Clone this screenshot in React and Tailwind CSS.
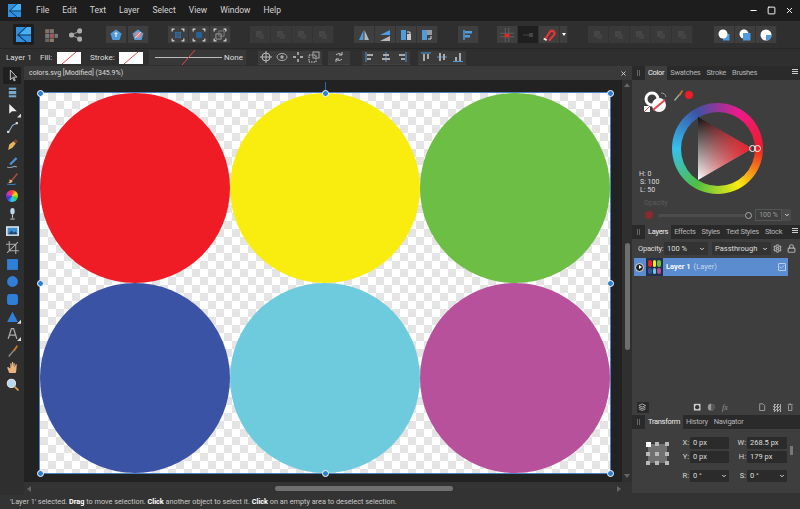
import { X, Minus, Square, ChevronDown, Settings, Lock, Check } from "lucide-react";

const menus = ["File", "Edit", "Text", "Layer", "Select", "View", "Window", "Help"];

function Logo({ size = 16 }) {
    return (
        <svg width={size} height={size} viewBox="0 0 16 16">
            <path d="M0 0h16v16H0z" fill="#2f8fe0" />
            <path d="M11 0h5v8.500H2z" fill="#49b0f5" />
            <path d="M11 0 2 8.500h14M2 8.500 11 16" stroke="#0d3557" strokeWidth="1.100" fill="none" />
        </svg>
    );
}

function Btn({ children, dim, dark, w = "w-[21px]" }) {
    return (
        <div className={`${w} h-[17px] flex items-center justify-center border-r border-[#333] ${dark ? "bg-[#1f1f1f]" : dim ? "bg-[#393939]" : "bg-[#3f3f3f]"}`}>
            {children}
        </div>
    );
}

function Ico({ children, s = 12 }) {
    return (
        <svg width={s} height={s} viewBox="0 0 12 12">
            {children}
        </svg>
    );
}

function Dim() {
    return (
        <Ico>
            <rect x="2" y="2" width="6" height="6" fill="#464646" />
            <rect x="5" y="5" width="5" height="5" fill="#434343" />
        </Ico>
    );
}

function Corners({ children }) {
    return (
        <Ico s={14}>
            <path d="M1 3V1h2M9 1h2v2M11 9v2H9M3 11H1V9" stroke="#d8d8d8" fill="none" />
            {children}
        </Ico>
    );
}

function ContextIcon({ kind }) {
    return (
        <Ico>
            {kind === 0 && <><circle cx="6" cy="6" r="4" stroke="#bbb" fill="none" /><path d="M6 0v12M0 6h12" stroke="#bbb" /></>}
            {kind === 1 && <><ellipse cx="6" cy="6" rx="5" ry="3.500" stroke="#aaa" fill="none" /><circle cx="6" cy="6" r="1.700" fill="#aaa" /></>}
            {kind === 2 && <path d="M6 1v3M6 8v3M1 6h3M8 6h3" stroke="#ccc" strokeWidth="1.300" />}
            {kind === 3 && <><rect x="1" y="4" width="7" height="7" stroke="#ccc" strokeDasharray="1.500 1" fill="none" /><rect x="5" y="1" width="6" height="6" stroke="#aaa" fill="none" /></>}
            {kind === 4 && <path d="M3 4a4 4 0 0 1 6 0M9 8a4 4 0 0 1-6 0M9 1v3H6M3 11V8h3" stroke="#bbb" fill="none" />}
            {kind === 5 && <><path d="M2 1v10" stroke="#4a9ae0" /><path d="M3 3h6v2H3zM3 7h4v2H3z" fill="#aaa" /></>}
            {kind === 6 && <><path d="M6 1v10" stroke="#4a9ae0" /><path d="M3 3h6v2H3zM2 7h8v2H2z" fill="#aaa" /></>}
            {kind === 7 && <><path d="M10 1v10" stroke="#4a9ae0" /><path d="M3 3h6v2H3zM5 7h4v2H5z" fill="#aaa" /></>}
            {kind === 8 && <><path d="M1 2h10" stroke="#4a9ae0" /><path d="M3 3h2v7H3zM7 3h2v5H7z" fill="#aaa" /></>}
            {kind === 9 && <><path d="M1 6h10" stroke="#4a9ae0" /><path d="M3 2h2v8H3zM7 3h2v6H7z" fill="#aaa" /></>}
            {kind === 10 && <><path d="M1 10.500h10" stroke="#4a9ae0" /><path d="M3 6h2v4H3zM7 2h2v8H7z" fill="#aaa" /></>}
        </Ico>
    );
}

function CtxBtn({ kind, w = "w-[16px]" }) {
    return (
        <div className={`${w} h-[14px] bg-[#3b3b3b] flex items-center justify-center border-b border-[#444]`}>
            <ContextIcon kind={kind} />
        </div>
    );
}

function NoneSwatch() {
    return (
        <svg width="24" height="12" viewBox="0 0 24 12">
            <rect width="24" height="12" fill="#fff" />
            <path d="M5 12 19 0" stroke="#e2474d" strokeWidth="1" />
        </svg>
    );
}

const tools = [
    <path key="a" d="M4 1v9l2-2 1.500 3 1-.500-1.500-3H10z" fill="#2a2a2a" stroke="#ddd" strokeWidth=".8" />,
    <g key="b"><rect x="2" y="1" width="8" height="10" fill="#7aa8cc" stroke="#2a2a2a" /><path d="M2 4h8M2 8h8" stroke="#2a2a2a" /></g>,
    <path key="c" d="M3 1v9l2.500-2.500H10z" fill="#eee" />,
    <g key="d"><path d="M2 11 6 4l4-2" stroke="#8fb4d8" fill="none" /><rect x="1" y="9" width="2" height="2" fill="#ddd" /><rect x="9" y="1" width="2" height="2" fill="#ddd" /></g>,
    <g key="e"><path d="M2 11 3 6l4-3 2 2-3 4z" fill="#e7b35a" /><path d="m7 3 2-2 2 2-2 2z" fill="#7a4030" /></g>,
    <g key="f"><path d="m3 8 6-6 1.500 1.500-6 6z" fill="#4a90d8" /><path d="M1 11q3 1 5 0t4 0" stroke="#8899aa" fill="none" /></g>,
    <g key="g"><path d="m5 7 5-6 1 1-5 6z" fill="#a0503c" /><path d="M3 7q3 0 3 2-2 2-4 1 2-1 1-3z" fill="#e4b070" /><path d="M1 11q4 1 8 0" stroke="#3d7bbf" fill="none" /></g>,
    null,
    <g key="i"><ellipse cx="6" cy="4" rx="2" ry="3" fill="#bcd8ee" /><path d="M6 7v3M4 11h4" stroke="#ccc" /></g>,
    <g key="j"><rect x="0" y="2" width="12" height="9" fill="#d6e2ec" /><rect x="1.500" y="3.500" width="9" height="6" fill="#3e8ed0" /><path d="M2 9.500 5 6l2 2 2-1 1.500 2.500z" fill="#22476e" /></g>,
    <path key="k" d="M3 0v9h9M0 3h9v9M1 11l10-10" stroke="#aaa" fill="none" />,
    <rect key="l" x="1" y="1" width="10" height="10" fill="#2f7fd6" />,
    <circle key="m" cx="6" cy="6" r="5" fill="#2f7fd6" />,
    <rect key="n" x="1" y="1" width="10" height="10" rx="2.500" fill="#2f7fd6" />,
    <path key="o" d="M6 1.500 11 11H1z" fill="#2f7fd6" />,
    <path key="p" d="M2 11 5 1.500h2L10 11M3.500 7.500h5" stroke="#aaa" strokeWidth="1.200" fill="none" />,
    <g key="q"><path d="m2 11 5-6 1 1-5 6z" fill="#888" /><path d="m7 5 3-4 1 1-3 5z" fill="#c97a2c" /></g>,
    <path key="r" d="M3 11 1 6l1-.500L4 7V2l1 0 .500 3V1h1l.500 4V2l1 0v4l1-3 1 0-.500 6L9 11z" fill="#e8b27c" />,
    <g key="s"><circle cx="5" cy="5" r="3.800" fill="#b8d6ee" stroke="#e4e4e4" /><path d="m8 8 3.500 3.500" stroke="#d99a4e" strokeWidth="1.600" /></g>,
];

function Tool({ icon, index }) {
    const hasCorner = index === 2 || index === 14 || index === 15;
    return (
        <div className={`relative w-[18px] ml-[3px] h-[17.200px] flex items-center justify-center ${index === 0 ? "bg-[#1f1f1f]" : ""}`}>
            {icon}
            {hasCorner && <div className="w-[4px] h-[4px] absolute right-0 bottom-[1px] bg-[#ddd] [clip-path:polygon(100%_0,100%_100%,0_100%)]" />}
        </div>
    );
}

function ColorWheelIcon() {
    return <div className="w-[12px] h-[12px] rounded-full bg-[conic-gradient(#f33,#fd0,#3c4,#3cf,#33c,#c3c,#f33)]" />;
}

function Tabs({ items, active }) {
    return (
        <div className="h-[14px] bg-[#2a2a2a] flex items-stretch text-[7.500px] tracking-[-0.3px] leading-[14px] shrink-0 relative whitespace-nowrap">
            <div className="w-[13px] flex items-center justify-center gap-px">
                <div className="w-px h-[6px] bg-[#666]" />
                <div className="w-px h-[6px] bg-[#666]" />
            </div>
            {items.map((t) => (
                <div key={t} className={t === active ? "px-[3px] bg-[#3e3e3e] text-[#eee]" : "px-[3px] text-[#b4b4b4]"}>
                    {t}
                </div>
            ))}
        </div>
    );
}

function PanelMenu() {
    return (
        <div className="absolute right-[2px] top-[3px] flex flex-col gap-px w-[6px]">
            <div className="h-px bg-[#ccc]" />
            <div className="h-px bg-[#ccc]" />
            <div className="h-px bg-[#ccc]" />
        </div>
    );
}

function Handle({ className }) {
    return <div className={`absolute w-[7px] h-[7px] -ml-[3.500px] -mt-[3.500px] rounded-full bg-[#2a7fd0] border border-white ${className}`} />;
}

function Field({ label, value, drop, wide }) {
    return (
        <div className="flex items-center">
            <span className="w-[11px] text-right text-[7.500px] text-[#d8d8d8] mr-[1px]">{label}</span>
            <div className={`${wide ? "w-[40px]" : "w-[39px]"} h-[12px] bg-[#2b2b2b] rounded-[1px] text-[7.500px] leading-[12px] pl-[3px] text-[#ddd] flex justify-between items-center`}>
                {value}
                {drop && <ChevronDown size={6} strokeWidth={4} className="mr-[2px] text-[#ddd]" />}
            </div>
        </div>
    );
}

export default function App() {
    return (
        <div className="w-[800px] h-[509px] overflow-hidden flex flex-col bg-[#2e2e2e] text-[#ddd] font-['Roboto',sans-serif]">
            {/* menu bar */}
            <div className="h-[21px] bg-[#1d1d1d] flex items-center shrink-0">
                <div className="ml-[8px]"><Logo size={13} /></div>
                <div className="flex ml-[15px] gap-[13px] text-[8.500px] text-[#d4d4d4]">
                    {menus.map((m) => <span key={m}>{m}</span>)}
                </div>
                <div className="ml-auto flex items-center gap-[9px] mr-[6px] text-white">
                    <Minus size={9} strokeWidth={3} />
                    <Square size={9} strokeWidth={2.500} />
                    <X size={9} strokeWidth={2.500} />
                </div>
            </div>

            {/* main toolbar */}
            <div className="h-[28px] bg-[#2f2f2f] border-b border-[#262626] flex items-center pl-[13px] shrink-0">
                <div className="w-[21px] h-[21px] bg-[#1d1d1d] flex items-center justify-center rounded-[2px]"><Logo size={15} /></div>
                <div className="ml-[10px]">
                    <Ico s={14}>
                        <rect x="1" y="1" width="3.500" height="3.500" fill="#8a6e5a" /><rect x="5" y="1" width="3.500" height="3.500" fill="#777" />
                        <rect x="1" y="5" width="3.500" height="3.500" fill="#777" /><rect x="5" y="5" width="3.500" height="3.500" fill="#a05a5a" /><rect x="9" y="5" width="3.500" height="3.500" fill="#777" />
                        <rect x="5" y="9" width="3.500" height="3.500" fill="#8f7a62" /><rect x="1" y="9" width="3.500" height="3.500" fill="#666" />
                    </Ico>
                </div>
                <div className="ml-[10px]">
                    <Ico s={14}><path d="M3 6 10 2.500M3 6l7 3.500" stroke="#8c8c8c" /><circle cx="3" cy="6" r="2.200" fill="#aaa" /><circle cx="10" cy="2.500" r="2.200" fill="#aaa" /><circle cx="10" cy="9.500" r="2.200" fill="#aaa" /></Ico>
                </div>
                <div className="ml-[24px] flex gap-px">
                    <Btn><Ico><path d="M6 .500 11.500 4.500 9.500 11h-7L.500 4.500z" fill="#4f9bdc" /><path d="M6 8V4M4.500 5 6 3.500 7.500 5" stroke="#fff" fill="none" /></Ico></Btn>
                    <Btn><Ico><path d="M6 .500 11.500 4.500 9.500 11h-7L.500 4.500z" fill="#5a9cd8" /><circle cx="6" cy="6" r="3" fill="#e3848a" /><path d="m3 9 6-6" stroke="#ddd" /></Ico></Btn>
                </div>
                <div className="ml-[19px] flex">
                    <Btn><Corners><path d="M3.500 3.500h5v5h-5z" fill="#2d7cc6" /><path d="M3.500 5.200h5M3.500 6.800h5M5.200 3.500v5M6.800 3.500v5" stroke="#404040" strokeWidth=".5" /></Corners></Btn>
                    <Btn><Corners><path d="M3.500 3.500h5v5h-5z" fill="#27639c" /></Corners></Btn>
                    <Btn><Corners><path d="M2.500 5h4.500v4.500H2.500z" stroke="#aaa" fill="none" strokeWidth=".7" /><path d="M5 2.500h4.500V7H5z" stroke="#888" fill="none" strokeWidth=".7" /></Corners></Btn>
                </div>
                <div className="ml-[19px] flex">
                    {[0, 1, 2, 3].map((i) => <Btn key={i} dim><Dim /></Btn>)}
                </div>
                <div className="ml-[20px] flex">
                    <Btn><Ico><path d="M5.500 1v10H1z" fill="#4f9bdc" /><path d="M6.500 1v10H11z" fill="#b8b8b8" /></Ico></Btn>
                    <Btn><Ico><path d="M11 1v5H1z" fill="#4f9bdc" /><path d="M11 7v5H1z" fill="#b8b8b8" /></Ico></Btn>
                    <Btn><Ico><rect x="1" y="1" width="5" height="10" fill="#4f9bdc" /><rect x="7" y="5" width="4" height="6" fill="#c8c8c8" /><path d="M7 3h3v2" stroke="#ddd" fill="none" /></Ico></Btn>
                    <Btn><Ico><rect x="1" y="1" width="5" height="10" fill="#4f9bdc" /><rect x="6" y="1" width="5" height="5" fill="#999" /><path d="M10 7v3H7" stroke="#ddd" fill="none" /></Ico></Btn>
                </div>
                <div className="ml-[20px]">
                    <Btn><Ico><path d="M2 1v10" stroke="#4f9bdc" strokeWidth="1.500" /><path d="M3 2h7v2.500H3zM3 6h5v2.500H3z" fill="#4f9bdc" /></Ico></Btn>
                </div>
                <div className="ml-[18px] flex">
                    <Btn><Ico s={14}><path d="M0 4.500h12M0 7.500h12M4.500 0v12M7.500 0v12" stroke="#666" strokeWidth=".7" /><rect x="4" y="5" width="4" height="3" fill="#e22" /></Ico></Btn>
                    <Btn dark><Ico><path d="M1 6h6" stroke="#444" /><rect x="7" y="4" width="4" height="4" fill="#444" /></Ico></Btn>
                    <Btn><Ico s={14}><path d="M2.500 10 7 3a2.200 2.200 0 0 1 3.500 2.500L6 11" stroke="#e03535" strokeWidth="2" fill="none" /><path d="m1.500 9 2.500 1.500" stroke="#eee" strokeWidth="1.500" /></Ico></Btn>
                    <Btn w="w-[8px]"><div className="border-x-[2.500px] border-x-transparent border-t-[3px] border-t-white" /></Btn>
                </div>
                <div className="ml-[20px] flex">
                    {[0, 1, 2, 3, 4].map((i) => <Btn key={i} dim><Dim /></Btn>)}
                </div>
                <div className="ml-[21px] flex">
                    <Btn><Ico><rect x="5" y="5" width="6.500" height="6.500" fill="#4f9bdc" /><circle cx="5" cy="5" r="4.500" fill="#fff" /></Ico></Btn>
                    <Btn><Ico><circle cx="5" cy="5" r="4.500" fill="#fff" /><rect x="4" y="4" width="7.500" height="7.500" fill="#4f9bdc" /></Ico></Btn>
                    <Btn><Ico><circle cx="6" cy="6" r="5.500" fill="#fff" /><path d="M6 6h5.500a5.500 5.500 0 0 1-5.500 5.500z" fill="#4f9bdc" /></Ico></Btn>
                </div>
            </div>

            {/* context bar */}
            <div className="h-[17px] bg-[#2f2f2f] flex items-center pl-[6px] text-[8px] shrink-0">
                <span className="w-[28px] whitespace-nowrap">Layer 1</span>
                <span className="ml-[6px] w-[11px]">Fill:</span>
                <div className="ml-[6px]"><NoneSwatch /></div>
                <span className="ml-[9px] w-[23px]">Stroke:</span>
                <div className="ml-[6px]"><NoneSwatch /></div>
                <div className="ml-[6px] w-[97px] h-[15px] bg-[#383838] flex items-center pl-[6px] relative">
                    <div className="w-[67px] h-px bg-[#bbb]" />
                    <svg className="absolute left-[32px] top-0" width="16" height="15"><path d="M1 15 14 0" stroke="#e2474d" /></svg>
                    <span className="ml-[2px]">None</span>
                </div>
                <div className="ml-[12px] flex">
                    {[0, 1, 2, 3].map((k) => <CtxBtn key={k} kind={k} />)}
                </div>
                <div className="ml-[6px]"><CtxBtn kind={4} w="w-[22px]" /></div>
                <div className="ml-[12px] flex">
                    <CtxBtn kind={5} /><CtxBtn kind={6} /><CtxBtn kind={7} />
                </div>
                <div className="ml-[8px] flex">
                    <CtxBtn kind={8} /><CtxBtn kind={9} /><CtxBtn kind={10} />
                </div>
            </div>

            <div className="flex h-[429px] shrink-0">
                {/* tools */}
                <div className="w-[24px] bg-[#2f2f2f] shrink-0 flex flex-col pt-[1px]">
                    {tools.map((t, i) => (
                        <Tool key={i} index={i} icon={t ? <Ico s={13}>{t}</Ico> : <ColorWheelIcon />} />
                    ))}
                </div>

                {/* document */}
                <div className="w-[608px] shrink-0 flex flex-col">
                    <div className="h-[14px] bg-[#3a3a3a] flex items-center pl-[5px] text-[7px] text-[#ddd] shrink-0">
                        colors.svg [Modified] (345.9%)
                        <X size={7} strokeWidth={3} className="ml-auto mr-[5px] text-[#ddd]" />
                    </div>
                    <div className="flex h-[402px] shrink-0">
                        <div className="w-[598px] bg-[#222222] pl-[16px] pt-[13px] relative">
                            <div className="absolute left-[301px] top-[2px] w-px h-[11px] bg-[#2b6cb0]" />
                            <div className="relative w-[570px] h-[380px] outline outline-1 outline-[#4a80c4]">
                                <div className="w-[570px] h-[380px] grid grid-cols-3 grid-rows-2 bg-[repeating-conic-gradient(#e4e4e4_0_25%,#ffffff_0_50%)] bg-[length:16px_16px]">
                                    <div className="rounded-full bg-[#ef1c26]" />
                                    <div className="rounded-full bg-[#f9ed10]" />
                                    <div className="rounded-full bg-[#6cbe45]" />
                                    <div className="rounded-full bg-[#3b53a4]" />
                                    <div className="rounded-full bg-[#6dcbdd]" />
                                    <div className="rounded-full bg-[#b8519c]" />
                                </div>
                                <Handle className="left-0 top-0" />
                                <Handle className="left-1/2 top-0" />
                                <Handle className="left-full top-0" />
                                <Handle className="left-0 top-1/2" />
                                <Handle className="left-full top-1/2" />
                                <Handle className="left-0 top-full" />
                                <Handle className="left-1/2 top-full" />
                                <Handle className="left-full top-full" />
                            </div>
                        </div>
                        <div className="w-[10px] bg-[#2f2f2f] flex flex-col items-center">
                            <div className="mt-[3px] border-x-[3px] border-x-transparent border-b-[4px] border-b-[#666]" />
                            <div className="mt-[156px] w-[5px] h-[107px] rounded-full bg-[#6e6e6e]" />
                            <div className="mt-auto mb-[4px] border-x-[3px] border-x-transparent border-t-[4px] border-t-[#666]" />
                        </div>
                    </div>
                    <div className="h-[13px] bg-[#333333] flex items-center shrink-0">
                        <div className="ml-[3px] border-y-[3px] border-y-transparent border-r-[4px] border-r-[#666]" />
                        <div className="ml-[244px] w-[178px] h-[5px] rounded-full bg-[#707070]" />
                        <div className="ml-[164px] border-y-[3px] border-y-transparent border-l-[4px] border-l-[#666]" />
                    </div>
                </div>

                {/* right panels */}
                <div className="flex-1 min-w-0 flex flex-col bg-[#3e3e3e]">
                    <div className="relative">
                        <Tabs items={["Color", "Swatches", "Stroke", "Brushes"]} active="Color" />
                        <PanelMenu />
                    </div>
                    <div className="h-[145px] shrink-0 flex flex-col relative">
                        <div className="absolute left-[11px] top-[11px]">
                            <svg width="24" height="22" viewBox="0 0 24 22">
                                <circle cx="9" cy="8" r="6" fill="none" stroke="#fff" strokeWidth="3" />
                                <circle cx="16" cy="14" r="7" fill="#fff" />
                                <path d="m10 19 12-10" stroke="#e2474d" strokeWidth="2" />
                                <rect x="1" y="15" width="6" height="6" fill="#fff" />
                                <path d="m1 21 6-6" stroke="#e2474d" />
                                <path d="M18 2a5 5 0 0 1 5 4" stroke="#999" fill="none" />
                            </svg>
                        </div>
                        <div className="h-[23px] pt-[9px] pl-[40px] flex items-start gap-[1px]">
                            <Ico><path d="m2 11 5-6 1 1-5 6z" fill="#aaa" /><path d="m7 5 3-4 1 1-3 5z" fill="#c97a2c" /></Ico>
                            <div className="w-[8px] h-[8px] mt-[2px] rounded-full bg-[#ef1c26]" />
                        </div>
                        <div className="flex h-[91px]">
                            <div className="w-[40px] pl-[7px] text-[7px] leading-[8px] self-end shrink-0 flex flex-col">
                                <span>H: 0</span>
                                <span className="pl-[1px]">S: 100</span>
                                <span className="pl-[1px]">L: 50</span>
                            </div>
                            <div className="relative w-[91px] h-[91px] rounded-full flex items-center justify-center bg-[conic-gradient(from_90deg,#ef1c26,#f9ed10_60deg,#4fbe45_120deg,#35c0ee_180deg,#3b53a4_240deg,#ec1a8c_300deg,#ef1c26)]">
                                <div className="w-[74px] h-[74px] rounded-full bg-[#3e3e3e]" />
                                <div className="absolute left-[26px] top-[14px] w-[54px] h-[63px] [clip-path:polygon(0_0,0_100%,100%_50%)] bg-[linear-gradient(to_right,transparent,#ef1c26),linear-gradient(to_bottom,#111111,#ffffff)]" />
                                <div className="absolute left-[77px] top-[42px] w-[7px] h-[7px] rounded-full border border-white" />
                                <div className="absolute left-[82px] top-[42px] w-[7px] h-[7px] rounded-full border border-white" />
                            </div>
                        </div>
                        <div className="pl-[12px] mt-[5px] text-[7px] leading-[9px] text-[#5c5c5c]">Opacity</div>
                        <div className="flex items-center pl-[13px] mt-[1px]">
                            <div className="w-[8px] h-[8px] rounded-full bg-[#8a2a2e]" />
                            <div className="ml-[5px] w-[87px] h-[3px] rounded-full bg-[#4c4c4c]" />
                            <div className="w-[7px] h-[7px] rounded-full border border-[#aaa] bg-[#3e3e3e]" />
                            <div className="ml-[3px] w-[27px] h-[12px] border border-[#555] text-[7px] leading-[10px] text-center text-[#999]">100 %</div>
                            <div className="w-[9px] h-[12px] bg-[#4a4a4a] flex items-center justify-center"><ChevronDown size={6} strokeWidth={4} /></div>
                        </div>
                    </div>

                    <div className="relative">
                        <Tabs items={["Layers", "Effects", "Styles", "Text Styles", "Stock"]} active="Layers" />
                        <PanelMenu />
                    </div>
                    <div className="h-[19px] flex items-center pl-[6px] text-[7.500px] shrink-0 whitespace-nowrap">
                        <span className="w-[25px] tracking-[-0.2px]">Opacity:</span>
                        <div className="ml-[1px] w-[44px] h-[13px] bg-[#333] flex items-center justify-between px-[3px]">100 %<ChevronDown size={6} strokeWidth={4} /></div>
                        <div className="ml-[4px] w-[59px] h-[13px] bg-[#333] flex items-center justify-between px-[3px]">Passthrough<ChevronDown size={6} strokeWidth={4} /></div>
                        <Settings size={9} strokeWidth={3} className="ml-[2px] text-[#aaa]" />
                        <Lock size={9} strokeWidth={3} className="ml-[5px] text-[#aaa]" />
                    </div>
                    <div className="h-[18px] w-[154px] ml-[2px] bg-[#5a8ccf] flex items-center shrink-0 text-[7.500px]">
                        <div className="ml-[1px] w-[9px] h-[9px] rounded-full bg-[#222] border border-[#ddd] flex items-center justify-center">
                            <div className="ml-px border-y-[2px] border-y-transparent border-l-[3px] border-l-white" />
                        </div>
                        <div className="ml-[2px] w-[17px] h-[18px] bg-[#22304a] grid grid-cols-3 grid-rows-2 gap-px p-[2px]">
                            <div className="rounded-full bg-[#ef1c26]" />
                            <div className="rounded-full bg-[#f9ed10]" />
                            <div className="rounded-full bg-[#6cbe45]" />
                            <div className="rounded-full bg-[#3b53a4]" />
                            <div className="rounded-full bg-[#6dcbdd]" />
                            <div className="rounded-full bg-[#b8519c]" />
                        </div>
                        <span className="ml-[3px] font-semibold text-white">Layer 1</span>
                        <span className="ml-[3px] text-[#c6d6ec]">(Layer)</span>
                        <div className="ml-auto mr-[2px] w-[8px] h-[8px] border border-[#b9cde8] rounded-[1px] flex items-center justify-center"><Check size={6} strokeWidth={3} className="text-[#cfdcf0]" /></div>
                    </div>
                    <div className="h-[126px] shrink-0" />
                    <div className="h-[11px] flex items-center shrink-0">
                        <div className="ml-[5px] w-[12px] h-[11px] bg-[#2a2a2a] flex items-center justify-center">
                            <Ico s={10}><path d="M1 3 5 1l4 2-4 2zM1 5l4 2 4-2M1 7l4 2 4-2" fill="none" stroke="#bbb" /></Ico>
                        </div>
                        <div className="ml-[44px]"><Ico s={10}><rect x="1" y="1" width="8" height="8" fill="#ccc" /><circle cx="5" cy="5" r="2.500" fill="#333" /></Ico></div>
                        <div className="ml-[4px]"><Ico s={10}><circle cx="5" cy="5" r="4" fill="#999" /><path d="M5 1a4 4 0 0 1 0 8z" fill="#555" /></Ico></div>
                        <span className="ml-[5px] w-[6px] italic text-[8px] text-[#999] font-['Liberation_Serif',serif]">fx</span>
                        <div className="ml-[30px]"><Ico s={10}><path d="M2 1h4l2 2v6H2z" fill="none" stroke="#aaa" /></Ico></div>
                        <div className="ml-[5px] w-[8px] h-[8px] bg-[repeating-conic-gradient(#aaa_0_25%,#444_0_50%)] bg-[length:3px_3px]" />
                        <div className="ml-[5px]"><Ico s={10}><path d="M2 2h6M4 1h2M3 3v6h4V3" fill="none" stroke="#aaa" /></Ico></div>
                    </div>
                    <div className="h-[2px] shrink-0" />
                    <Tabs items={["Transform", "History", "Navigator"]} active="Transform" />
                    <div className="h-[64px] shrink-0 flex pt-[8px]">
                        <div className="ml-[14px] mt-[5px] w-[23px] h-[23px] relative shrink-0">
                            <div className="absolute inset-[2px] bg-[#707070]" />
                            <div className="relative grid grid-cols-3 gap-[5px]">
                                <div className="w-[5px] h-[5px] bg-white" />
                                {[0, 1, 2, 3, 4, 5, 6, 7].map((i) => <div key={i} className="w-[4px] h-[4px] bg-[#b9b9b9]" />)}
                            </div>
                        </div>
                        <div className="ml-[9px] grid grid-cols-[57px_52px] grid-rows-[12px_12px_12px] gap-y-[2px] h-[45px] content-start shrink-0">
                            <Field label="X:" value="0 px" />
                            <Field label="W:" value="268.5 px" wide />
                            <Field label="Y:" value="0 px" />
                            <Field label="H:" value="179 px" wide />
                            <div className="mt-[5px]"><Field label="R:" value="0 °" drop /></div>
                            <div className="mt-[5px]"><Field label="S:" value="0 °" drop wide /></div>
                        </div>
                        <div className="ml-[3px] mt-[9px] w-[3px] h-[9px] bg-[#777]" />
                    </div>
                    <div className="flex-1 bg-[#333333]" />
                </div>
            </div>

            {/* status bar */}
            <div className="h-[14px] bg-[#333333] shrink-0 flex items-center pl-[10px] text-[7.300px] text-[#c8c8c8] whitespace-nowrap">
                <span>'Layer 1' selected.&nbsp;<b className="text-white">Drag</b> to move selection.&nbsp;<b className="text-white">Click</b> another object to select it.&nbsp;<b className="text-white">Click</b> on an empty area to deselect selection.</span>
            </div>
        </div>
    );
}
